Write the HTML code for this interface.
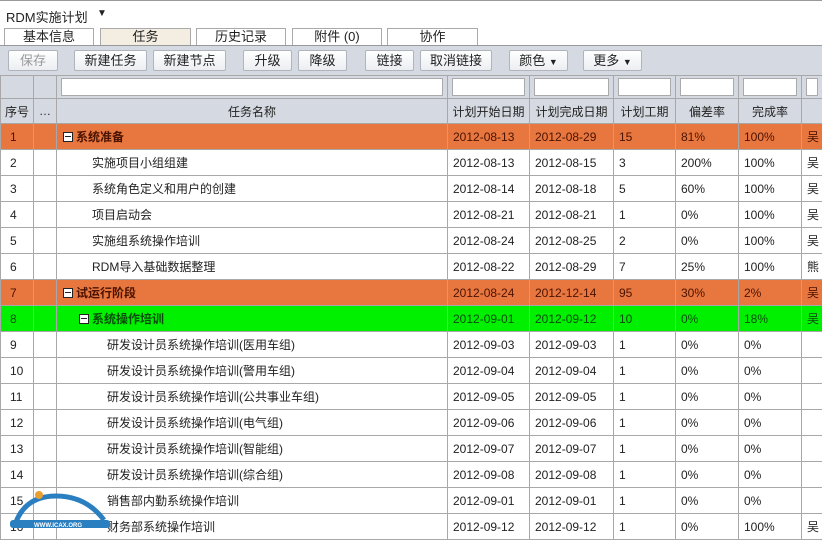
<!DOCTYPE html><html><head><meta charset="utf-8"><style>
*{margin:0;padding:0;box-sizing:border-box}
body{width:822px;height:540px;overflow:hidden;background:#fff;font-family:"Liberation Sans","Noto Sans CJK SC",sans-serif;font-size:12px;color:#222;position:relative}
.a{position:absolute}
.tab{position:absolute;top:28px;height:17px;border:1px solid #aaa;border-bottom:none;background:#fff;text-align:center;font-size:13px;line-height:16px}
.btn{position:absolute;top:50px;height:21px;border:1px solid #b0b4bc;border-radius:2px;background:linear-gradient(#fff,#eceef2);text-align:center;font-size:13px;line-height:19px}
table{position:absolute;left:0;top:75px;width:822px;border-collapse:collapse;table-layout:fixed}
td{border:1px solid #a8a8a8;height:26px;padding:0 0 0 5px;white-space:nowrap;overflow:hidden;font-size:12px}
tr.f td{height:23px;background:#d5d9e1;padding:2px 4px}
tr.f td div{background:#fff;border:1px solid #aaa;height:18px}
tr.h td{background:#d5d9e1;text-align:center;padding:0;height:25px;font-size:12px}
td.n{padding-left:9px}
tr.o td{background:#e8773f;color:#4a1200}
tr.g td{background:#00f000;color:#0a4a0a}
b{font-weight:bold}
.bx{display:inline-block;width:10px;height:10px;border:1px solid #222;background:#fff;position:relative;vertical-align:-1px;margin-right:3px}
.bx:after{content:"";position:absolute;left:1px;top:3px;width:6px;height:1px;background:#222}
</style></head><body>
<div class="a" style="left:0;top:0;width:822px;height:1px;background:#999"></div>
<div class="a" style="left:6px;top:7px;font-size:13px">RDM实施计划</div>
<div class="a" style="left:97px;top:8px;font-size:10px">▼</div>
<div class="tab" style="left:4px;width:90px">基本信息</div>
<div class="tab" style="left:100px;width:91px;background:#f3ede2">任务</div>
<div class="tab" style="left:196px;width:90px">历史记录</div>
<div class="tab" style="left:292px;width:90px">附件 (0)</div>
<div class="tab" style="left:387px;width:91px">协作</div>
<div class="a" style="left:0;top:45px;width:822px;height:31px;background:#d5d9e1;border-top:1px solid #999"></div>
<div class="btn" style="left:8px;width:50px;color:#999">保存</div>
<div class="btn" style="left:74px;width:73px">新建任务</div>
<div class="btn" style="left:153px;width:73px">新建节点</div>
<div class="btn" style="left:243px;width:49px">升级</div>
<div class="btn" style="left:298px;width:49px">降级</div>
<div class="btn" style="left:365px;width:49px">链接</div>
<div class="btn" style="left:420px;width:72px">取消链接</div>
<div class="btn" style="left:509px;width:59px">颜色 <span style="font-size:9px">▼</span></div>
<div class="btn" style="left:583px;width:59px">更多 <span style="font-size:9px">▼</span></div>
<table>
<colgroup><col style="width:33px"><col style="width:23px"><col style="width:391px"><col style="width:82px"><col style="width:84px"><col style="width:62px"><col style="width:63px"><col style="width:63px"><col style="width:21px"></colgroup>
<tr class="f"><td></td><td></td><td><div></div></td><td><div></div></td><td><div></div></td><td><div></div></td><td><div></div></td><td><div></div></td><td><div></div></td></tr>
<tr class="h"><td>序号</td><td>…</td><td>任务名称</td><td>计划开始日期</td><td>计划完成日期</td><td>计划工期</td><td>偏差率</td><td>完成率</td><td></td></tr>
<tr class="o"><td class="n">1</td><td></td><td style="padding-left:6px"><span class="bx"></span><b>系统准备</b></td><td>2012-08-13</td><td>2012-08-29</td><td>15</td><td>81%</td><td>100%</td><td>吴</td></tr>
<tr><td class="n">2</td><td></td><td style="padding-left:35px">实施项目小组组建</td><td>2012-08-13</td><td>2012-08-15</td><td>3</td><td>200%</td><td>100%</td><td>吴</td></tr>
<tr><td class="n">3</td><td></td><td style="padding-left:35px">系统角色定义和用户的创建</td><td>2012-08-14</td><td>2012-08-18</td><td>5</td><td>60%</td><td>100%</td><td>吴</td></tr>
<tr><td class="n">4</td><td></td><td style="padding-left:35px">项目启动会</td><td>2012-08-21</td><td>2012-08-21</td><td>1</td><td>0%</td><td>100%</td><td>吴</td></tr>
<tr><td class="n">5</td><td></td><td style="padding-left:35px">实施组系统操作培训</td><td>2012-08-24</td><td>2012-08-25</td><td>2</td><td>0%</td><td>100%</td><td>吴</td></tr>
<tr><td class="n">6</td><td></td><td style="padding-left:35px">RDM导入基础数据整理</td><td>2012-08-22</td><td>2012-08-29</td><td>7</td><td>25%</td><td>100%</td><td>熊</td></tr>
<tr class="o"><td class="n">7</td><td></td><td style="padding-left:6px"><span class="bx"></span><b>试运行阶段</b></td><td>2012-08-24</td><td>2012-12-14</td><td>95</td><td>30%</td><td>2%</td><td>吴</td></tr>
<tr class="g"><td class="n">8</td><td></td><td style="padding-left:22px"><span class="bx"></span><b>系统操作培训</b></td><td>2012-09-01</td><td>2012-09-12</td><td>10</td><td>0%</td><td>18%</td><td>吴</td></tr>
<tr><td class="n">9</td><td></td><td style="padding-left:50px">研发设计员系统操作培训(医用车组)</td><td>2012-09-03</td><td>2012-09-03</td><td>1</td><td>0%</td><td>0%</td><td></td></tr>
<tr><td class="n">10</td><td></td><td style="padding-left:50px">研发设计员系统操作培训(警用车组)</td><td>2012-09-04</td><td>2012-09-04</td><td>1</td><td>0%</td><td>0%</td><td></td></tr>
<tr><td class="n">11</td><td></td><td style="padding-left:50px">研发设计员系统操作培训(公共事业车组)</td><td>2012-09-05</td><td>2012-09-05</td><td>1</td><td>0%</td><td>0%</td><td></td></tr>
<tr><td class="n">12</td><td></td><td style="padding-left:50px">研发设计员系统操作培训(电气组)</td><td>2012-09-06</td><td>2012-09-06</td><td>1</td><td>0%</td><td>0%</td><td></td></tr>
<tr><td class="n">13</td><td></td><td style="padding-left:50px">研发设计员系统操作培训(智能组)</td><td>2012-09-07</td><td>2012-09-07</td><td>1</td><td>0%</td><td>0%</td><td></td></tr>
<tr><td class="n">14</td><td></td><td style="padding-left:50px">研发设计员系统操作培训(综合组)</td><td>2012-09-08</td><td>2012-09-08</td><td>1</td><td>0%</td><td>0%</td><td></td></tr>
<tr><td class="n">15</td><td></td><td style="padding-left:50px">销售部内勤系统操作培训</td><td>2012-09-01</td><td>2012-09-01</td><td>1</td><td>0%</td><td>0%</td><td></td></tr>
<tr><td class="n">16</td><td></td><td style="padding-left:50px">财务部系统操作培训</td><td>2012-09-12</td><td>2012-09-12</td><td>1</td><td>0%</td><td>100%</td><td>吴</td></tr>
</table>
<svg class="a" style="left:6px;top:490px" width="104" height="42" viewBox="0 0 104 42">
<path d="M10 32 Q20 6 50 6 Q80 6 98 30" fill="none" stroke="#2a7fc0" stroke-width="5"/>
<rect x="4" y="30" width="100" height="8" rx="3" fill="#2a7fc0"/>
<text x="52" y="37" font-size="6" fill="#fff" text-anchor="middle" font-family="Liberation Sans" font-weight="bold">WWW.ICAX.ORG</text>
<circle cx="33" cy="5" r="4" fill="#e8a030"/>
</svg>
</body></html>
